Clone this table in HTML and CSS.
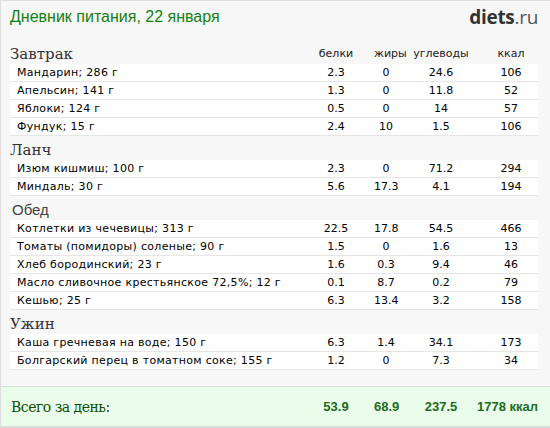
FILE: index.html
```html
<!DOCTYPE html>
<html lang="ru">
<head>
<meta charset="utf-8">
<title>Дневник питания</title>
<link rel="stylesheet" href="styles.css">
</head>
<body>
<div class="page">
  <header class="top">
    <h1 class="title">Дневник питания, 22 января</h1>
    <div class="logo"><b>diets</b>.ru</div>
  </header>

  <section class="meal">
    <div class="meal-head">
      <h2 class="meal-name">Завтрак</h2>
      <span class="col">белки</span><span class="col">жиры</span><span class="col">углеводы</span><span class="col">ккал</span>
    </div>
    <div class="row"><span class="name">Мандарин; 286 г</span><span>2.3</span><span>0</span><span>24.6</span><span>106</span></div>
    <div class="row"><span class="name">Апельсин; 141 г</span><span>1.3</span><span>0</span><span>11.8</span><span>52</span></div>
    <div class="row"><span class="name">Яблоки; 124 г</span><span>0.5</span><span>0</span><span>14</span><span>57</span></div>
    <div class="row"><span class="name">Фундук; 15 г</span><span>2.4</span><span>10</span><span>1.5</span><span>106</span></div>
  </section>

  <section class="meal">
    <div class="meal-head"><h2 class="meal-name">Ланч</h2></div>
    <div class="row"><span class="name">Изюм кишмиш; 100 г</span><span>2.3</span><span>0</span><span>71.2</span><span>294</span></div>
    <div class="row"><span class="name">Миндаль; 30 г</span><span>5.6</span><span>17.3</span><span>4.1</span><span>194</span></div>
  </section>

  <section class="meal">
    <div class="meal-head"><h2 class="meal-name sans">Обед</h2></div>
    <div class="row"><span class="name">Котлетки из чечевицы; 313 г</span><span>22.5</span><span>17.8</span><span>54.5</span><span>466</span></div>
    <div class="row"><span class="name">Томаты (помидоры) соленые; 90 г</span><span>1.5</span><span>0</span><span>1.6</span><span>13</span></div>
    <div class="row"><span class="name">Хлеб бородинский; 23 г</span><span>1.6</span><span>0.3</span><span>9.4</span><span>46</span></div>
    <div class="row"><span class="name">Масло сливочное крестьянское 72,5%; 12 г</span><span>0.1</span><span>8.7</span><span>0.2</span><span>79</span></div>
    <div class="row"><span class="name">Кешью; 25 г</span><span>6.3</span><span>13.4</span><span>3.2</span><span>158</span></div>
  </section>

  <section class="meal">
    <div class="meal-head"><h2 class="meal-name">Ужин</h2></div>
    <div class="row"><span class="name">Каша гречневая на воде; 150 г</span><span>6.3</span><span>1.4</span><span>34.1</span><span>173</span></div>
    <div class="row"><span class="name">Болгарский перец в томатном соке; 155 г</span><span>1.2</span><span>0</span><span>7.3</span><span>34</span></div>
  </section>

  <footer class="total">
    <span class="total-label">Всего за день:</span>
    <span class="num">53.9</span><span class="num">68.9</span><span class="num">237.5</span><span class="num kcal">1778 ккал</span>
  </footer>
</div>
</body>
</html>
```

FILE: styles.css
```css
* { box-sizing: border-box; }
html, body { margin: 0; padding: 0; }
body { background: #f7f7f7; font-family: "DejaVu Sans", Verdana, sans-serif; }

.page {
  width: 550px;
  height: 428px;
  background: #f7f7f7;
  border: 1px solid #dedede;
  border-right: none;
  display: flex;
  flex-direction: column;
}

.top {
  height: 39px;
  display: flex;
  justify-content: space-between;
  align-items: flex-start;
  padding: 6px 12px 0 9px;
}
.title {
  margin: 0;
  font-family: "Liberation Sans", Arial, sans-serif;
  font-weight: normal;
  font-size: 16px;
  color: #138013;
  line-height: 20px;
}
.logo {
  font-family: "Open Sans", Lato, sans-serif;
  font-size: 19px;
  color: #555;
  line-height: 20px;
  letter-spacing: -0.3px;
}
.logo b { color: #333; font-weight: 700; }

.meal { padding: 0 12px 0 9px; }

.meal-head, .row {
  display: grid;
  grid-template-columns: 1fr 76px 24px 86px 54px;
  align-items: center;
}
.meal-head { height: 24px; }
.meal-name {
  margin: 0;
  font-family: "DejaVu Serif", Georgia, serif;
  font-weight: normal;
  font-size: 15px;
  color: #333;
  padding-top: 3px;
}
.meal-name.sans {
  font-family: "Liberation Sans", Arial, sans-serif;
  font-size: 15px;
  color: #444;
  padding-left: 2px;
}
.col {
  font-size: 11px;
  color: #222;
  text-align: center;
  white-space: nowrap;
  padding-top: 2px;
}

.row {
  height: 18px;
  background: #fff;
  border-bottom: 1px solid #e6e6e6;
  font-size: 11px;
  color: #000;
}
.row span { text-align: center; white-space: nowrap; }
.row .name { text-align: left; padding-left: 7px; letter-spacing: 0.3px; }

.total {
  margin-top: 16px;
  flex: 1;
  background: #eafdea;
  border-top: 1px solid #dcdcdc;
  border-bottom: 1px solid #dcdcdc;
  display: grid;
  grid-template-columns: 1fr 76px 24px 86px 54px;
  align-items: center;
  padding: 0 12px 0 9px;
}
.total-label {
  font-family: "DejaVu Serif", Georgia, serif;
  font-size: 14px;
  color: #0b4f0b;
  padding-left: 1px;
  letter-spacing: -0.5px;
}
.num {
  font-family: "Liberation Sans", Arial, sans-serif;
  font-weight: bold;
  font-size: 13px;
  color: #226b22;
  text-align: center;
  white-space: nowrap;
}
.num.kcal { justify-self: end; text-align: right; }
```
